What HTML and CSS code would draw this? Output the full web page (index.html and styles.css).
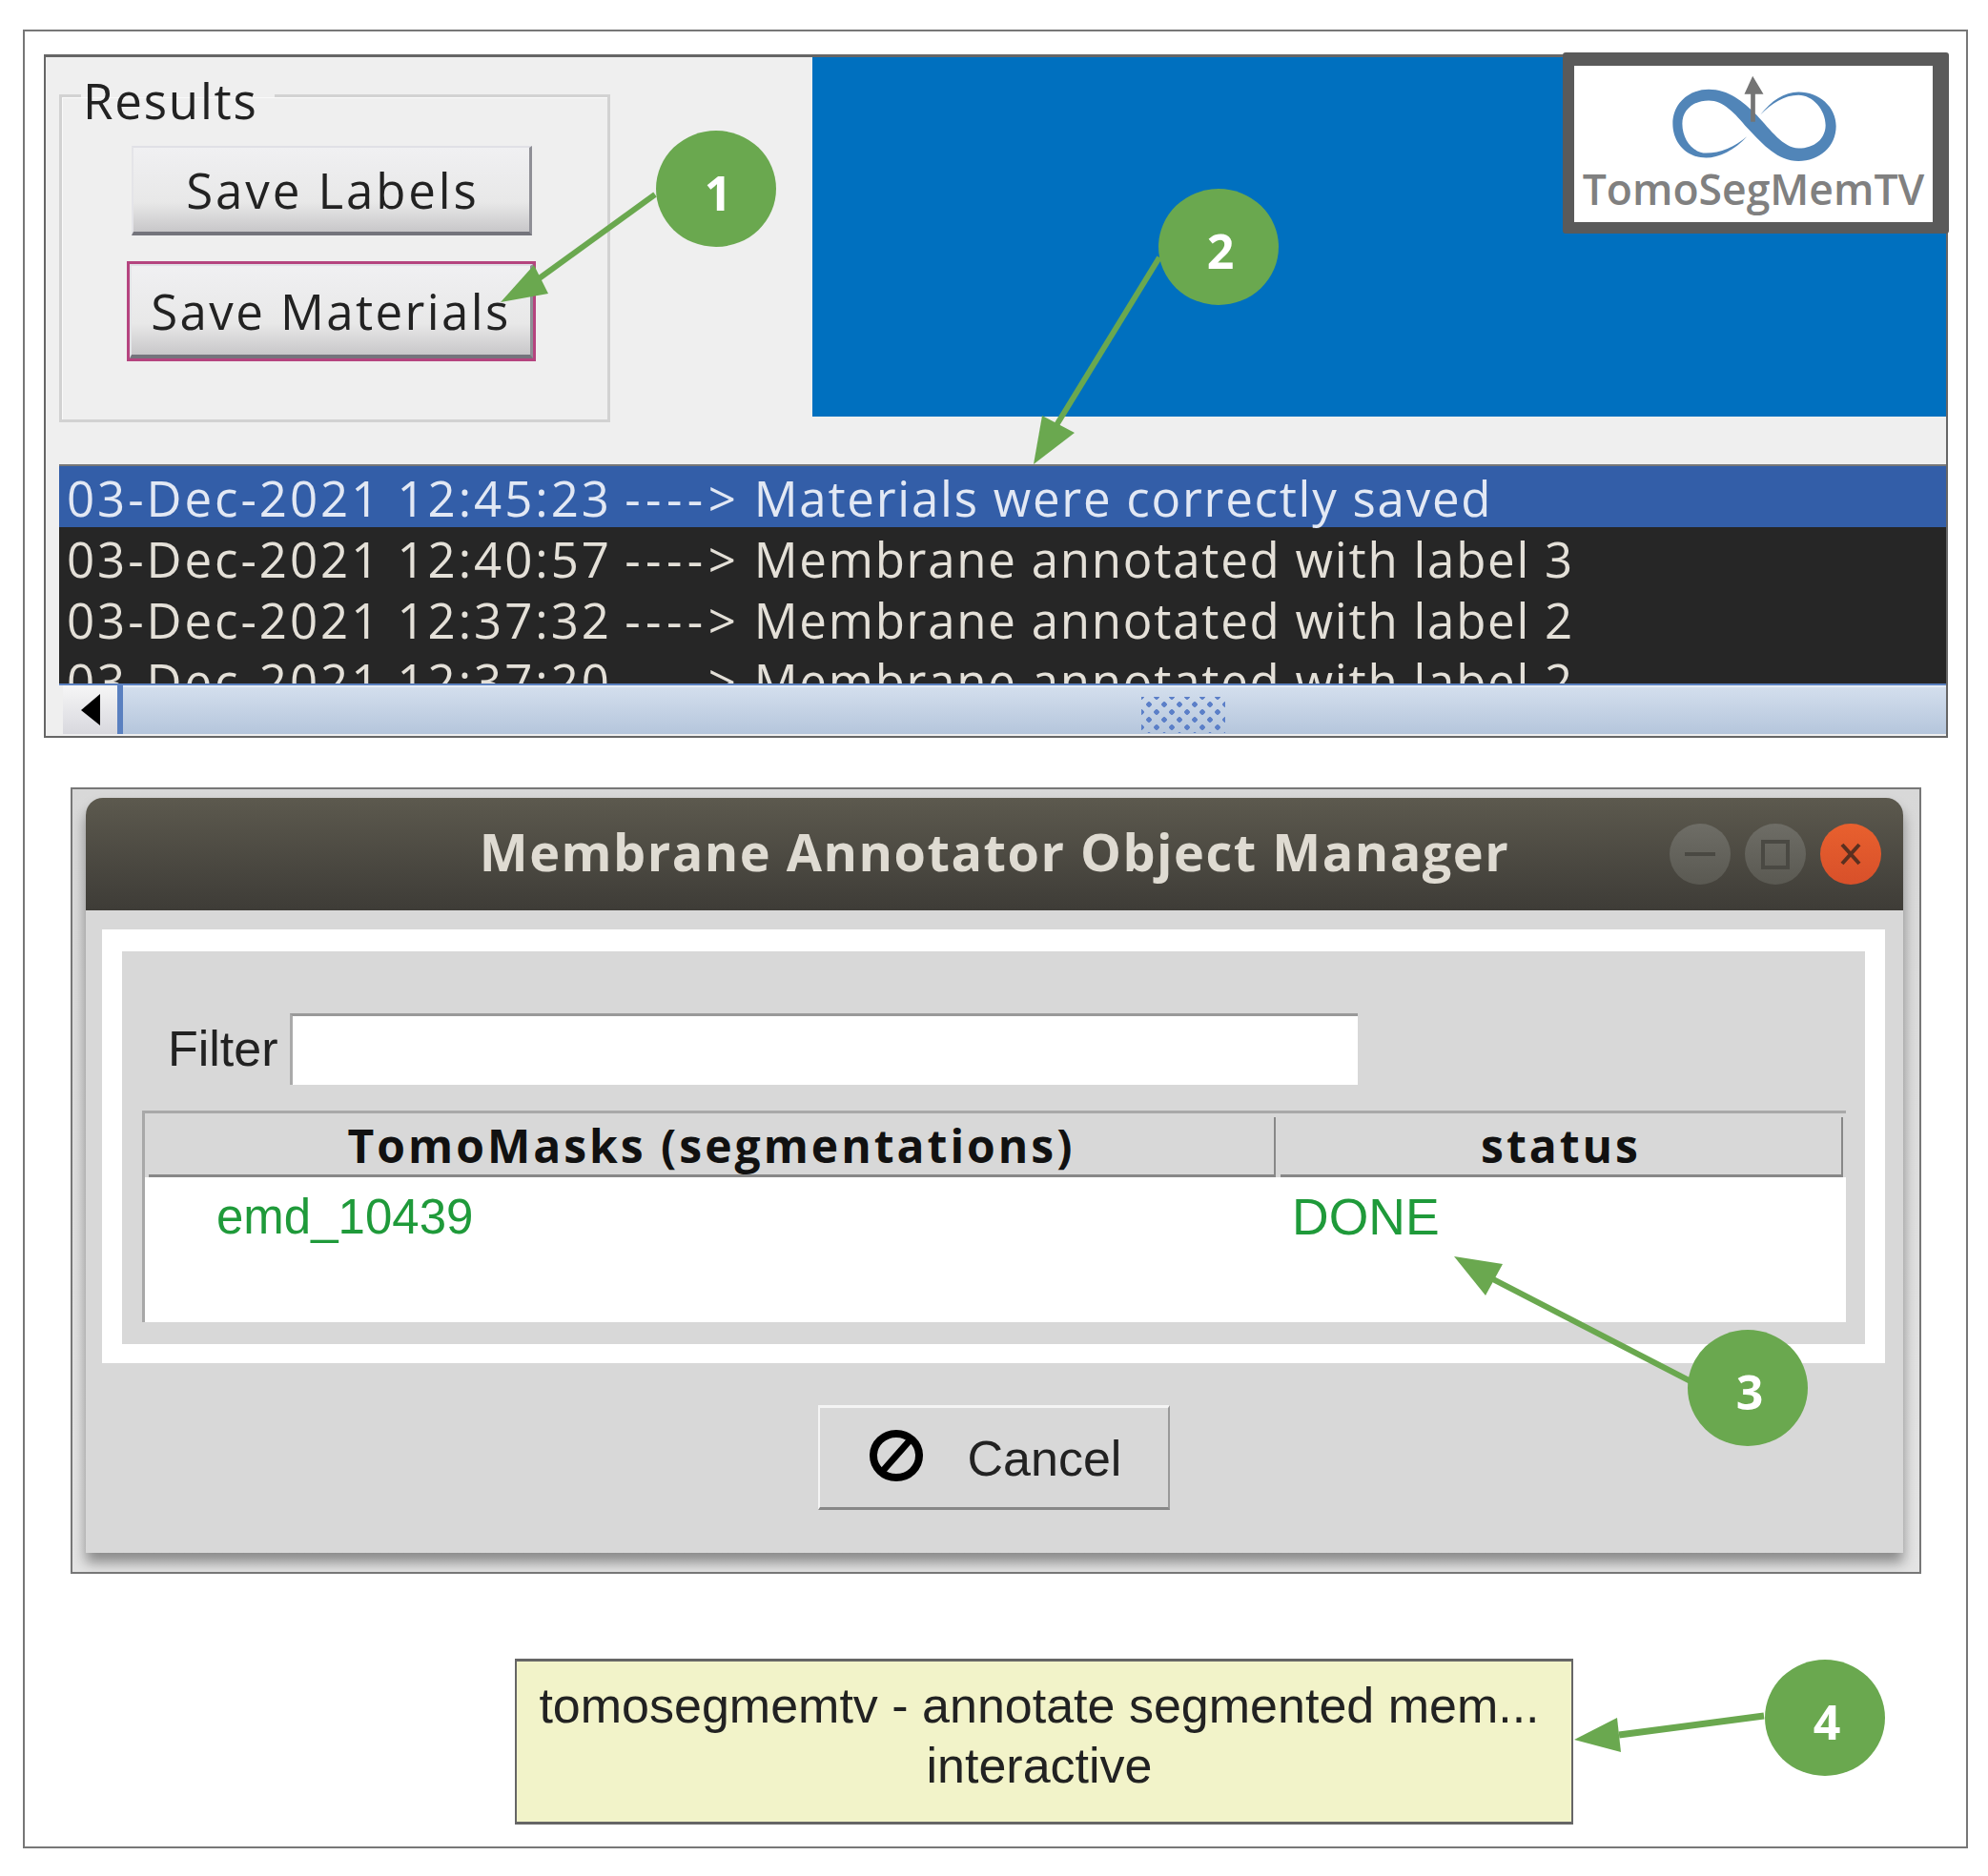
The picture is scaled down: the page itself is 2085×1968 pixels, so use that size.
FILE: index.html
```html
<!DOCTYPE html>
<html lang="en">
<head>
  <meta charset="UTF-8" />
  <title>TomoSegMemTV annotation steps</title>
  <link rel="stylesheet" href="styles.css">
</head>
<body>
  <div class="frame">
    <div class="panel">
      <div class="panel-top">
        <fieldset class="group">
          <legend>Results</legend>
          <button class="gui-btn save-labels" type="button">Save Labels</button>
          <div class="focus-ring"><button class="gui-btn save-materials" type="button">Save Materials</button></div>
        </fieldset>
        <div class="banner">
          <div class="logo">
            <div class="logo-inner">
              <svg class="logo-mark" viewBox="440 110 560 290" width="187" height="97">
                <path fill="#5185b8" d="M698 308C660 350 610 375 570 375C505 375 465 325 465 268C465 205 515 160 578 160C640 160 685 197 728 240C775 290 810 342 860 345C910 345 945 315 945 272C945 225 905 178 860 178C815 178 775 205 740 240C775 195 815 168 860 168C925 168 978 215 978 275C978 340 925 385 860 385C795 385 750 335 700 282C660 235 625 195 578 195C530 195 495 225 495 268C495 320 530 360 570 360C615 360 660 340 698 308Z"/>
                <path fill="#747474" d="M710 262V175H690L716 118L750 175H724V262Z"/>
              </svg>
              <div class="logo-text">TomoSegMemTV</div>
            </div>
          </div>
        </div>
      </div>
      <div class="log">
        <div class="log-rows">
          <div class="log-row selected"><span class="stamp">03-Dec-2021 12:45:23</span> <span class="sep">----&gt;</span> <span class="msg">Materials were correctly saved</span></div>
          <div class="log-row"><span class="stamp">03-Dec-2021 12:40:57</span> <span class="sep">----&gt;</span> <span class="msg">Membrane annotated with label 3</span></div>
          <div class="log-row"><span class="stamp">03-Dec-2021 12:37:32</span> <span class="sep">----&gt;</span> <span class="msg">Membrane annotated with label 2</span></div>
          <div class="log-row"><span class="stamp">03-Dec-2021 12:37:20</span> <span class="sep">----&gt;</span> <span class="msg">Membrane annotated with label 2</span></div>
        </div>
        <div class="scrollbar">
          <div class="scroll-left">
            <svg viewBox="0 0 20 33" width="20" height="33"><path d="M20 0V33L0 17Z" fill="#000"/></svg>
          </div>
          <div class="scroll-track"><div class="scroll-grip"></div></div>
        </div>
      </div>
    </div>

    <div class="window-frame">
      <div class="window">
        <div class="titlebar">
          <span></span>
          <div class="title">Membrane Annotator Object Manager</div>
          <div class="controls">
            <div class="ctl"><svg viewBox="0 0 64 64" width="64" height="64"><path d="M16 32H48" stroke="#4a4943" stroke-width="4"/></svg></div>
            <div class="ctl"><svg viewBox="0 0 64 64" width="64" height="64"><rect x="19" y="19" width="26" height="27" fill="none" stroke="#4a4943" stroke-width="4"/></svg></div>
            <div class="ctl close"><svg viewBox="0 0 64 64" width="64" height="64"><path d="M23 22L41 42M41 22L23 42" stroke="#5a3020" stroke-width="4"/></svg></div>
          </div>
        </div>
        <div class="win-body">
          <div class="white-band">
            <div class="inner">
              <div class="filter-row">
                <label class="filter-label" for="filter">Filter</label>
                <input class="filter-input" id="filter" type="text">
              </div>
              <div class="table">
                <div class="table-head">
                  <div class="th th-name">TomoMasks (segmentations)</div>
                  <div class="th th-status">status</div>
                </div>
                <div class="table-row">
                  <div class="td-name">emd_10439</div>
                  <div class="td-status">DONE</div>
                </div>
              </div>
            </div>
          </div>
          <div class="btn-row">
            <button class="cancel" type="button">
              <svg viewBox="0 0 58 56" width="58" height="56">
                <ellipse cx="29" cy="28" rx="24" ry="23" fill="none" stroke="#000" stroke-width="8"/>
                <path d="M14 45L44 11" stroke="#000" stroke-width="7"/>
              </svg>
              <span>Cancel</span>
            </button>
          </div>
        </div>
      </div>
    </div>

    <div class="tooltip">tomosegmemtv - annotate segmented mem...<br>interactive</div>
  </div>

  <svg class="arrows" viewBox="0 0 2085 1968" width="2085" height="1968">
    <g fill="#6aa84f" stroke="#6aa84f">
      <path d="M687 204L560 296" stroke-width="6"/>
      <path d="M525 317L560 278L575 308Z" stroke="none"/>
      <path d="M1216 270L1108 446" stroke-width="6"/>
      <path d="M1084 487L1093 436L1127 454Z" stroke="none"/>
      <path d="M1775 1450L1566 1342" stroke-width="6"/>
      <path d="M1525 1318L1576 1326L1558 1359Z" stroke="none"/>
      <path d="M1850 1800L1698 1820" stroke-width="7"/>
      <path d="M1651 1825L1696 1802L1700 1838Z" stroke="none"/>
    </g>
  </svg>
  <div class="badge b1">1</div>
  <div class="badge b2">2</div>
  <div class="badge b3">3</div>
  <div class="badge b4">4</div>
</body>
</html>
```

FILE: styles.css
```css
body {
  margin: 0;
  background: #ffffff;
  font-family: "Open Sans", sans-serif;
  color: #222;
}

.frame {
  box-sizing: border-box;
  width: 2040px;
  height: 1908px;
  margin: 31px 0 0 24px;
  padding: 24px 0 0 20px;
  border: 2px solid #777;
}

/* top screenshot */
.panel {
  box-sizing: border-box;
  width: 1997px;
  height: 717px;
  border: 2px solid #666;
  border-top-width: 3px;
  background: #efefef;
}

.panel-top {
  display: flex;
  justify-content: space-between;
  height: 427px;
  padding-left: 14px;
}

.group {
  box-sizing: border-box;
  width: 578px;
  height: 378px;
  margin: 5px 0 0;
  padding: 0;
  border: 3px solid #d2d2d2;
  box-shadow: inset 1px 1px 0 #fafafa;
}

.group legend {
  margin-left: 20px;
  padding: 10px 17px 0 2px;
  font-size: 51px;
  letter-spacing: 1.8px;
  line-height: 60px;
  color: #222;
}

.gui-btn {
  display: block;
  box-sizing: border-box;
  font-family: "Open Sans", sans-serif;
  font-size: 51px;
  letter-spacing: 2.4px;
  color: #222;
  background: linear-gradient(#f0f0f2, #e8e8e8 65%, #c8c7c9);
  border: 0;
  border-top: 2px solid #e0e0e6;
  border-left: 2px solid #e4e4e8;
  border-right: 3px solid #8f8f96;
  border-bottom: 4px solid #74747c;
  padding: 0;
}

.save-labels {
  width: 420px;
  height: 94px;
  margin: 18px 0 0 73px;
  padding-left: 3px;
  letter-spacing: 2.9px;
}

.focus-ring {
  box-sizing: border-box;
  width: 429px;
  height: 105px;
  margin: 27px 0 0 68px;
  border: 3px solid #b5447f;
}

.save-materials {
  width: 100%;
  height: 100%;
}

.banner {
  position: relative;
  width: 1189px;
  height: 377px;
  background: #0070bf;
}

.logo {
  position: absolute;
  top: -5px;
  right: -3px;
  box-sizing: border-box;
  width: 405px;
  height: 190px;
  border: solid #5a5a5a;
  border-width: 14px 17px 12px 12px;
  border-radius: 3px;
}

.logo-inner {
  height: 100%;
  background: #fff;
  display: flex;
  flex-direction: column;
  align-items: center;
  padding-top: 8px;
  box-sizing: border-box;
}

.logo-mark {
  display: block;
}

.logo-text {
  font-size: 44.5px;
  font-weight: 600;
  line-height: 48px;
  color: #808080;
}

.log {
  margin-left: 14px;
}

.log-rows {
  box-sizing: border-box;
  height: 230px;
  padding-top: 2px;
  overflow: hidden;
  background: #262626;
  box-shadow: inset 0 2px 0 #777;
}

.log-row {
  height: 64px;
  padding-left: 8px;
  font-size: 51px;
  line-height: 66px;
  white-space: nowrap;
  color: #e4e0d8;
}

.log-row.selected {
  background: #335ea8;
  color: #e2e8f4;
}

.stamp {
  letter-spacing: 2.95px;
}

.sep {
  letter-spacing: 5.5px;
}

.msg {
  letter-spacing: 1.75px;
}

.scrollbar {
  display: flex;
  height: 53px;
  border-top: 2px solid #5a80c0;
  box-sizing: border-box;
  background: #efefef;
  padding-left: 4px;
}

.scroll-left {
  display: flex;
  align-items: center;
  justify-content: center;
  width: 57px;
  background: linear-gradient(#f6f6f6, #d8d8de);
  border-right: 6px solid #5a80c0;
}

.scroll-track {
  flex: 1;
  background: linear-gradient(#d3deed, #b5c6dc);
  border-top: 2px solid #e6edf6;
}

.scroll-grip {
  width: 88px;
  height: 38px;
  margin: 10px 0 0 1068px;
  background-image:
    radial-gradient(circle, #5b7fc8 2.5px, transparent 3px),
    radial-gradient(circle, #5b7fc8 2.5px, transparent 3px);
  background-size: 16px 16px;
  background-position: 0 0, 8px 8px;
}

/* object manager window */
.window-frame {
  box-sizing: border-box;
  width: 1941px;
  height: 825px;
  margin: 52px 0 0 28px;
  padding: 9px 17px 0 14px;
  border: 2px solid #777;
  background: linear-gradient(#d8d8d8, #e4e4e4);
  overflow: hidden;
}

.window {
  height: 792px;
  border-radius: 18px 18px 0 0;
  background: #d8d8d8;
  box-shadow: 0 10px 14px rgba(0, 0, 0, 0.4);
}

.titlebar {
  display: grid;
  grid-template-columns: 1fr auto 1fr;
  align-items: center;
  height: 118px;
  border-radius: 18px 18px 0 0;
  background: linear-gradient(#5c594e, #3e3c37);
}

.title {
  padding-bottom: 7px;
  font-size: 54px;
  font-weight: 700;
  letter-spacing: 1.5px;
  color: #dfdbd2;
  white-space: nowrap;
}

.controls {
  display: flex;
  justify-content: flex-end;
  gap: 15px;
  padding-right: 23px;
}

.ctl {
  width: 64px;
  height: 64px;
  border-radius: 50%;
  background: linear-gradient(#6e6d66, #5a5952);
}

.ctl.close {
  background: linear-gradient(#e8602e, #d8502a);
}

.ctl svg {
  display: block;
}

.win-body {
  padding: 20px 19px 0 17px;
}

.white-band {
  padding: 23px 21px 20px;
  background: #fff;
}

.inner {
  height: 412px;
  box-sizing: border-box;
  padding: 65px 20px 0 21px;
  background: #d8d8d8;
}

.filter-row {
  display: flex;
  align-items: center;
  height: 75px;
  padding-left: 27px;
  gap: 12px;
}

.filter-label {
  width: 116px;
  padding-bottom: 2px;
  font-family: "Liberation Sans", Arial, sans-serif;
  font-size: 52px;
  color: #222;
}

.filter-input {
  box-sizing: border-box;
  width: 1120px;
  height: 75px;
  padding: 0;
  background: #fff;
  border: 0;
  border-top: 3px solid #999;
  border-left: 3px solid #aaa;
  outline: none;
}

.table {
  margin-top: 27px;
  height: 222px;
  box-sizing: border-box;
  background: #fff;
  border-top: 3px solid #a8a8a8;
  border-left: 3px solid #a8a8a8;
}

.table-head {
  display: flex;
  gap: 5px;
  background: #d8d8d8;
  height: 67px;
  box-sizing: border-box;
  padding: 4px 3px 0 4px;
}

.th {
  box-sizing: border-box;
  height: 63px;
  border-right: 2px solid #888;
  border-bottom: 3px solid #888;
  font-size: 48px;
  font-weight: 700;
  letter-spacing: 3px;
  line-height: 60px;
  text-align: center;
  color: #111;
}

.th-name {
  width: 1182px;
}

.th-status {
  width: 590px;
}

.table-row {
  display: flex;
  padding: 12px 0 0 75px;
  font-family: "Liberation Sans", Arial, sans-serif;
  line-height: 60px;
  color: #1f9a3a;
}

.td-name {
  width: 1128px;
  font-size: 51px;
}

.td-status {
  font-size: 53.5px;
}

.btn-row {
  display: flex;
  justify-content: center;
  margin-top: 44px;
}

.cancel {
  display: flex;
  align-items: center;
  box-sizing: border-box;
  width: 369px;
  height: 110px;
  padding: 0 0 0 51px;
  gap: 46px;
  background: #d8d8d8;
  border: 0;
  border-top: 3px solid #f4f4f4;
  border-left: 2px solid #f4f4f4;
  border-right: 2px solid #999;
  border-bottom: 3px solid #888;
  font-family: "Liberation Sans", Arial, sans-serif;
  font-size: 52px;
  color: #222;
}

.cancel svg {
  margin-bottom: 4px;
}

.cancel span {
  margin-top: 2px;
}

.tooltip {
  box-sizing: border-box;
  width: 1110px;
  height: 174px;
  margin: 89px 0 0 494px;
  padding: 15px 10px 0 0;
  background: #f2f3c9;
  border: solid #666;
  border-width: 3px 2px;
  font-family: "Liberation Sans", Arial, sans-serif;
  font-size: 52px;
  line-height: 63px;
  text-align: center;
  color: #222;
}

/* annotations drawn over the screenshots */
.arrows {
  position: absolute;
  top: 0;
  left: 0;
}

.badge {
  position: absolute;
  box-sizing: border-box;
  width: 126px;
  height: 122px;
  padding-left: 4px;
  border-radius: 50%;
  background: #6aa84f;
  color: #fff;
  font-size: 50px;
  font-weight: 700;
  line-height: 130px;
  text-align: center;
}

.b1 { left: 688px; top: 137px; }
.b2 { left: 1215px; top: 198px; }
.b3 { left: 1770px; top: 1395px; }
.b4 { left: 1851px; top: 1741px; }
```
